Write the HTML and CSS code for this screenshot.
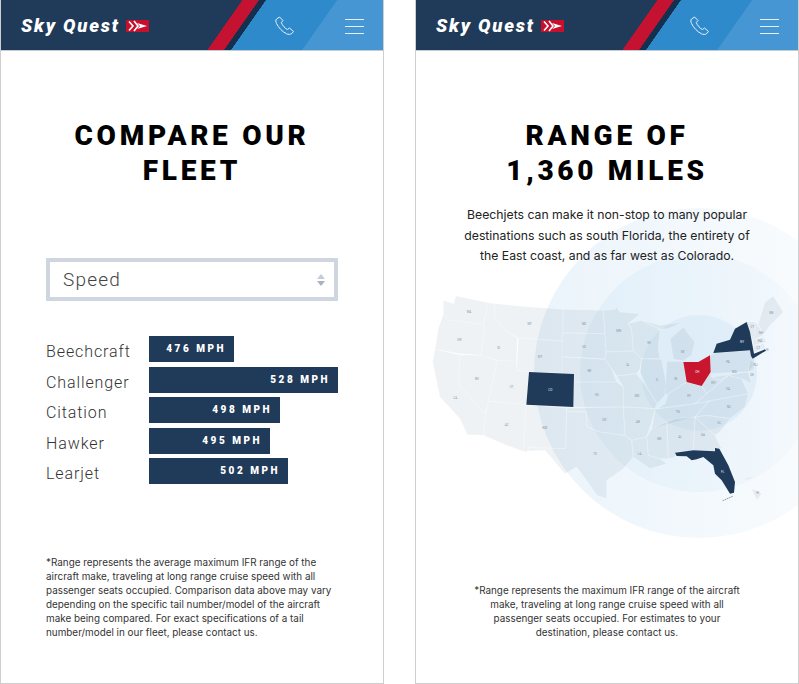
FILE: index.html
```html
<!DOCTYPE html>
<html lang="en">
<head>
<meta charset="utf-8">
<title>Sky Quest</title>
<link rel="stylesheet" href="styles.css">
</head>
<body>
<section class="panel">
  <header class="topbar">
    <div class="logo"><span class="logo-text">Sky Quest</span>
      <svg class="flag" viewBox="0 0 23 12"><rect width="23" height="12" fill="#c8102e"/><path d="M3 1.5 7 6 3 10.5M8 1 12 6 8 11" fill="none" stroke="#fff" stroke-width="1.6"/><path d="M11 3 21 6 11 9 14 6Z" fill="#fff"/></svg>
    </div>
    <svg class="phone" viewBox="0 0 20 20"><path d="M4.5 1 1.5 3C.5 4 .8 6 1.5 7.5 3.500 11.500 7 15.500 11.500 17.800 13 18.500 15.500 18.700 16.800 17.500L18.500 15.500 14.500 12 12.500 13.500C10.500 13 7 9 6.300 6.500L8 4.500Z"/></svg>
    <div class="burger"><i></i><i></i><i></i></div>
  </header>
  <h1 class="title">COMPARE OUR<br>FLEET</h1>
  <div class="select"><span>Speed</span><span class="arrows"><i class="up"></i><i class="down"></i></span></div>
  <div class="chart">
    <div class="row"><span class="name">Beechcraft</span><span class="bar" style="width:85px">476 MPH</span></div>
    <div class="row"><span class="name">Challenger</span><span class="bar" style="width:189px">528 MPH</span></div>
    <div class="row"><span class="name">Citation</span><span class="bar" style="width:131px">498 MPH</span></div>
    <div class="row"><span class="name">Hawker</span><span class="bar" style="width:121px">495 MPH</span></div>
    <div class="row"><span class="name">Learjet</span><span class="bar" style="width:139px">502 MPH</span></div>
  </div>
  <p class="note note-left">*Range represents the average maximum IFR range of the aircraft make, traveling at long range cruise speed with all passenger seats occupied. Comparison data above may vary depending on the specific tail number/model of the aircraft make being compared. For exact specifications of a tail number/model in our fleet, please contact us.</p>
</section>

<section class="panel">
  <header class="topbar">
    <div class="logo"><span class="logo-text">Sky Quest</span>
      <svg class="flag" viewBox="0 0 23 12"><rect width="23" height="12" fill="#c8102e"/><path d="M3 1.5 7 6 3 10.5M8 1 12 6 8 11" fill="none" stroke="#fff" stroke-width="1.6"/><path d="M11 3 21 6 11 9 14 6Z" fill="#fff"/></svg>
    </div>
    <svg class="phone" viewBox="0 0 20 20"><path d="M4.5 1 1.5 3C.5 4 .8 6 1.5 7.5 3.500 11.500 7 15.500 11.500 17.800 13 18.500 15.500 18.700 16.800 17.500L18.500 15.500 14.500 12 12.500 13.500C10.500 13 7 9 6.300 6.500L8 4.500Z"/></svg>
    <div class="burger"><i></i><i></i><i></i></div>
  </header>
  <h1 class="title">RANGE OF<br>1,360 MILES</h1>
  <p class="lead">Beechjets can make it non-stop to many popular destinations such as south Florida, the entirety of the East coast, and as far west as Colorado.</p>
  <svg class="map" viewBox="0 0 1137 810">
    <defs>
      <linearGradient id="fade" x1="0" x2="1" y1="0" y2="0"><stop offset="0" stop-color="#d8eaf7" stop-opacity=".52"/><stop offset="1" stop-color="#d8eaf7" stop-opacity=".1"/></linearGradient>
    </defs>
    <circle class="ring" cx="837" cy="303" r="495"/>
    <circle class="ring" cx="837" cy="303" r="357"/>
    <circle class="ring ring-in" cx="837" cy="303" r="174"/>
    <g class="states">
      <polygon points="70,85 100,95 108,72 205,92 190,158 120,148 85,145 70,125"/>
      <polygon points="70,125 85,145 120,148 190,158 195,170 182,250 118,245 45,232 55,170"/>
      <polygon points="205,92 225,95 222,130 245,165 262,180 292,197 290,268 232,266 182,250 195,170 190,158"/>
      <polygon points="225,95 330,105 430,112 428,207 295,198 262,180 245,165 222,130"/>
      <polygon points="295,198 428,207 425,303 327,300 290,295"/>
      <polygon points="120,248 182,250 232,266 205,388 197,428 115,335"/>
      <polygon points="232,266 290,268 290,295 327,300 319,398 205,388"/>
      <polygon points="205,388 319,398 310,538 260,520 190,490 197,428"/>
      <polygon points="319,398 440,408 437,530 325,527 322,540 310,538"/>
      <polygon points="45,232 120,248 115,335 197,428 190,490 142,488 120,440 60,375 38,270"/>
      <polygon points="430,112 550,115 555,185 428,183"/>
      <polygon points="428,183 555,185 558,240 555,262 510,258 425,255"/>
      <polygon points="425,255 555,262 575,290 590,330 462,330 462,306 425,303"/>
      <polygon points="462,330 590,330 610,345 610,405 460,405"/>
      <polygon points="440,408 610,405 615,490 540,480 500,465 500,420 440,418"/>
      <polygon points="440,418 500,420 500,465 540,480 615,490 635,505 640,555 610,590 560,625 560,680 530,670 510,640 470,585 435,605 405,570 375,535 325,537 325,527 437,530"/>
      <polygon points="550,115 585,112 590,105 600,120 660,125 625,155 635,170 640,237 558,240 555,185"/>
      <polygon points="558,240 640,237 665,260 660,290 650,305 590,312 575,290 555,262"/>
      <polygon points="590,312 650,305 680,345 712,395 705,410 610,405 610,345"/>
      <polygon points="610,405 705,410 695,450 680,495 635,505 615,490"/>
      <polygon points="635,505 680,495 685,550 720,560 740,575 690,590 640,555"/>
      <polygon points="625,155 665,145 720,172 715,230 720,260 665,260 640,237 635,170"/>
      <polygon points="665,260 725,262 740,340 735,370 712,395 680,345 660,300"/>
      <polygon points="740,268 790,268 800,330 745,365 735,370"/>
      <polygon points="760,262 750,200 790,165 825,210 815,250 790,267"/>
      <polygon points="665,145 720,160 790,150 745,170 720,172"/>
      <polygon points="712,410 735,395 745,365 800,330 845,342 860,365 825,395"/>
      <polygon points="705,412 825,395 868,387 825,435 695,470"/>
      <polygon points="868,387 985,365 975,405 930,440 860,430 825,435"/>
      <polygon points="825,395 860,365 890,340 925,310 965,320 985,365"/>
      <polygon points="845,342 872,300 875,315 900,325 925,310 890,340 860,365"/>
      <polygon points="870,250 885,243 990,235 1005,275 985,300 872,305"/>
      <polygon points="875,315 985,300 995,335 965,320 925,310 900,325"/>
      <polygon points="990,262 1005,275 1000,295 985,300"/>
      <polygon points="980,150 1005,150 1005,190 997,205 990,180"/>
      <polygon points="1005,150 1015,160 1030,190 997,205 1005,190"/>
      <polygon points="1015,155 1035,90 1060,72 1090,120 1050,160 1030,188"/>
      <polygon points="997,205 1030,195 1040,210 1000,220"/>
      <polygon points="1000,220 1022,217 1025,232 1003,240"/>
      <polygon points="1022,217 1032,215 1035,230 1025,232"/>
      <polygon points="860,430 930,440 900,480 885,490 825,435"/>
      <polygon points="825,435 885,490 905,530 885,528 885,538 820,535"/>
      <polygon points="765,440 825,435 820,535 770,540 765,555 745,560 740,450"/>
      <polygon points="695,470 740,450 745,560 720,560 685,550 680,495"/>
      <polygon points="972,620 995,614 993,620 975,624"/>
      <polygon points="995,650 1010,655 1025,665 1012,685 1003,670"/>
    </g>
    <polygon class="navy" points="327,300 462,306 460,405 319,398"/>
    <polygon class="navy" points="880,243 890,215 930,203 945,170 980,150 990,180 1002,245 1035,232 1038,236 998,260 993,252 990,235"/>
    <polygon class="navy" points="765,542 820,535 885,538 885,528 898,530 925,580 945,630 942,662 930,665 905,625 885,605 880,580 850,555 830,562 815,565 800,553 770,552"/>
    <polygon class="red" points="790,270 835,270 870,250 872,300 845,342 800,330"/>
    <path class="keys" d="M908 686 940 672"/>
    <g class="labels">
      <text x="147" y="124">WA</text><text x="329" y="159">MT</text><text x="492" y="159">ND</text><text x="596" y="181">MN</text><text x="687" y="216">WI</text><text x="788" y="244">MI</text><text x="1054" y="125">ME</text><text x="997" y="167">VT</text><text x="1023" y="186">NH</text><text x="1020" y="211">MA</text><text x="1015" y="231">CT</text><text x="1042" y="236">RI</text><text x="118" y="208">OR</text><text x="236" y="230">ID</text><text x="492" y="229">SD</text><text x="360" y="258">WY</text><text x="623" y="281">IA</text><text x="508" y="301">NE</text><text x="924" y="272">PA</text><text x="1007" y="282">NJ</text><text x="171" y="324">NV</text><text x="275" y="348">UT</text><text x="106" y="380">CA</text><text x="531" y="373">KS</text><text x="651" y="375">MO</text><text x="712" y="327">IL</text><text x="767" y="323">IN</text><text x="880" y="335">WV</text><text x="943" y="303">MD</text><text x="996" y="312">DE</text><text x="924" y="355">VA</text><text x="807" y="376">KY</text><text x="773" y="424">TN</text><text x="927" y="407">NC</text><text x="897" y="456">SC</text><text x="654" y="454">AR</text><text x="553" y="446">OK</text><text x="260" y="463">AZ</text><text x="374" y="471">NM</text><text x="849" y="492">GA</text><text x="780" y="498">AL</text><text x="718" y="504">MS</text><text x="659" y="548">LA</text><text x="525" y="549">TX</text><text x="1013" y="667">HI</text>
      <text class="light" x="391" y="358">CO</text><text class="light" x="966" y="212">NY</text><text class="light" x="908" y="602">FL</text><text class="light" x="832" y="304">OH</text>
    </g>
  </svg>
  <p class="note note-right">*Range represents the maximum IFR range of the aircraft make, traveling at long range cruise speed with all passenger seats occupied. For estimates to your destination, please contact us.</p>
</section>
</body>
</html>
```
FILE: styles.css
```css
* { box-sizing: border-box; }
html, body { margin: 0; padding: 0; background: #fff; }
body { display: flex; gap: 31px; width: 799px; height: 684px; overflow: hidden; font-family: "Roboto", sans-serif; }

.panel { width: 384px; height: 684px; display: flex; flex-direction: column; border: 1px solid #cfcfcf; border-top: 0; overflow: hidden; background: #fff; }

.topbar { flex: none; height: 51px; margin: 0 -1px; padding-top: 2px; display: flex; align-items: center; border-bottom: 1px solid #c3cbd5;
  background: linear-gradient(125deg, #203a59 198.4px, #c41230 198.8px, #c41230 212px, #14304f 212.4px, #14304f 217.7px, #2e8acb 218.1px, #2e8acb 276px, #4596d2 276.4px); }
.logo { display: flex; align-items: center; gap: 6px; margin-left: 21px; width: 254px; }
.logo-text { font: italic 900 18.500px/1 "Roboto", sans-serif; color: #fff; letter-spacing: 1.800px; }
.flag { width: 23px; height: 12px; }
.phone { width: 20px; height: 20px; fill: none; stroke: #fff; stroke-width: 1; opacity: .9; }
.burger { margin-left: 50px; width: 19px; display: flex; flex-direction: column; gap: 6px; }
.burger i { display: block; height: 1px; background: #e4f1fa; }

.title { margin: 68px 0 0; font: 900 28px/34.5px "Roboto", sans-serif; letter-spacing: 3.700px; text-align: center; color: #000; }

.select { margin: 70px 0 0 45px; width: 292px; height: 43px; border: 4px solid #cfd6e0; padding: 0 9px 0 13px; display: flex; align-items: center; justify-content: space-between; font-size: 19px; font-weight: 300; letter-spacing: 1.200px; color: #444; }
.arrows { display: flex; flex-direction: column; gap: 2px; }
.arrows i { display: block; width: 0; height: 0; border-left: 4px solid transparent; border-right: 4px solid transparent; }
.arrows .up { border-bottom: 5px solid #c5ccd6; }
.arrows .down { border-top: 5px solid #a9b2bf; }

.chart { margin: 35px 0 0 45px; display: flex; flex-direction: column; gap: 4.500px; }
.row { display: flex; align-items: center; height: 26px; }
.name { width: 103px; padding-top: 5px; font-size: 16px; font-weight: 300; letter-spacing: .9px; color: #333; }
.bar { height: 26px; background: #203a59; color: #fff; font-size: 10px; font-weight: 900; letter-spacing: 2.500px; line-height: 26px; text-align: right; padding-right: 8px; }

.note { font: 400 9.900px/14px "Inter", sans-serif; color: #333; margin: 0; }
.note-left { margin: 71px 0 0 45px; width: 290px; }
.note-right { margin: 41px auto 0; width: 278px; text-align: center; }

.lead { position: relative; z-index: 1; margin: 17px auto 0; width: 300px; font: 400 12.250px/20.500px "Inter", sans-serif; text-align: center; color: #222; }

.map { flex: none; width: 379px; height: 270px; margin: 5px 0 0 4px; overflow: visible; }
.ring { fill: url(#fade); }
.ring-in { fill: #d8eaf7; fill-opacity: .65; }
.states polygon { fill: #2a4a70; fill-opacity: .075; stroke: #fff; stroke-opacity: .6; stroke-width: 1.200; stroke-linejoin: round; }
.navy { fill: #203a59; }
.red { fill: #c8162f; }
.keys { stroke: #203a59; stroke-width: 1.500; stroke-dasharray: 5 2; fill: none; }
.labels text { font: 400 9px "Roboto", sans-serif; fill: #8a93a0; text-anchor: middle; }
.labels .light { fill: #e6ebf1; }
```
